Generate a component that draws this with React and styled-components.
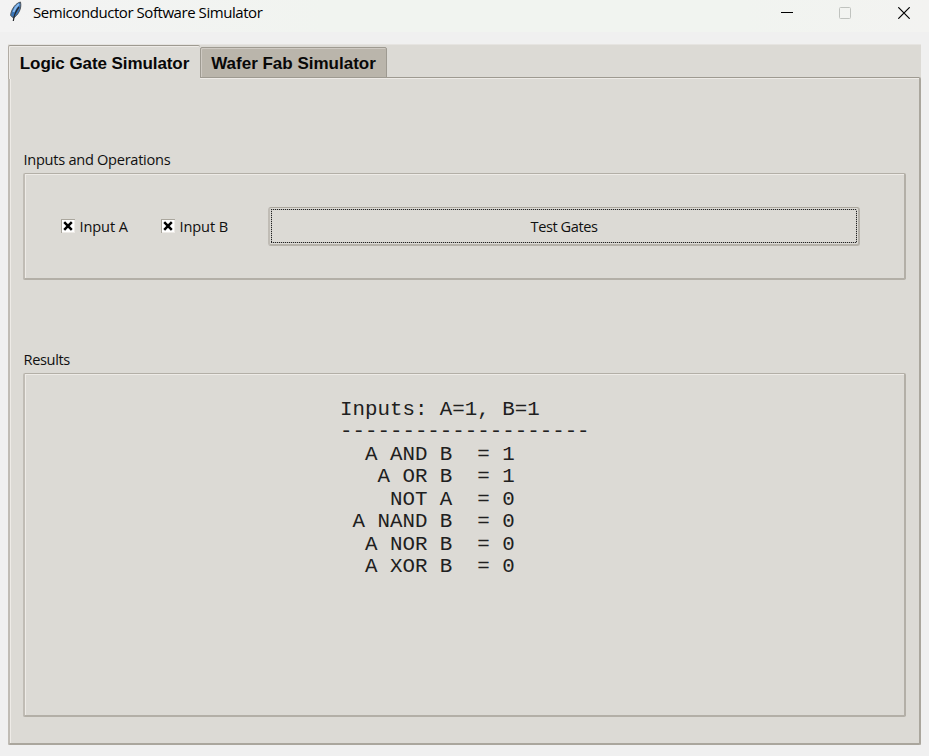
import React from "react";
import styled, { createGlobalStyle } from "styled-components";

const Global = createGlobalStyle`
  * { box-sizing: border-box; }
  body { margin: 0; background: #f0f0f0; overflow: hidden; }
`;

const Window = styled.div`
  width: 929px;
  height: 756px;
  background: #f0f0f0;
  color: #101010;
  font-family: "Open Sans", "Noto Sans", sans-serif;
  font-size: 14.6px;
`;

const TitleBar = styled.header`
  height: 32px;
  display: flex;
  align-items: flex-start;
  background: linear-gradient(90deg, #f3f3f3, #f1f4f0 35%, #f1f4f0 80%, #f3f3f1);
`;

const FeatherIcon = styled.svg`
  width: 14px;
  height: 21px;
  margin: 1px 0 0 8px;
`;

const Title = styled.h1`
  margin: 2px 0 0 11px;
  flex: 1;
  font-size: 15px;
  font-weight: 400;
  line-height: 20px;
  letter-spacing: -0.44px;
  white-space: nowrap;
  color: #000;
`;

const WindowControls = styled.div`
  display: flex;
  gap: 46px;
  padding: 7px 19px 0 0;
`;

const ControlIcon = styled.svg`
  width: 12px;
  height: 12px;
  display: block;

  &:last-child { margin-left: 1px; }
`;

const Notebook = styled.main`
  margin: 12px 8px 0;
  width: 913px;
  height: 701px;
  background: #dcdad5;
  border-top: 1px solid #e6e4e1;
  display: flex;
  flex-direction: column;
`;

const TabList = styled.nav`
  height: 32px;
  display: flex;
  align-items: flex-end;
`;

const Tab = styled.button`
  appearance: none;
  margin: 0;
  padding: 2px 0 0;
  width: ${(p) => p.$width}px;
  height: ${(p) => (p.$active ? 34 : 31)}px;
  margin-bottom: ${(p) => (p.$active ? -2 : -1)}px;
  border: 1px solid #9e9a91;
  border-bottom: ${(p) => (p.$active ? "0" : "1px solid #9e9a91")};
  border-left-color: ${(p) => (p.$active ? "#b1aca4" : "#9e9a91")};
  border-right-width: ${(p) => (p.$active ? 0 : 1)}px;
  border-radius: 2px 2px 0 0;
  background: ${(p) => (p.$active ? "#dcdad5" : "#bab5ab")};
  box-shadow: inset 1px 1px ${(p) => (p.$active ? "#eeebe7" : "#cfcac3")};
  font: bold 17px/24px "Liberation Sans", Arial, sans-serif;
  letter-spacing: ${(p) => p.$spacing}px;
  white-space: nowrap;
  color: #080808;
  z-index: 1;
`;

const Pane = styled.section`
  flex: 1;
  border: 2px solid #aaa69d;
  border-top: 1px solid #9e9a91;
  border-left-color: #c0bcb5;
  border-radius: 0 2px 2px 2px;
  box-shadow: inset 1px 1px #eeebe7;
  padding: 71px 13px 0;
`;

const GroupLabel = styled.h2`
  margin: 0;
  height: 24px;
  padding-left: 0.5px;
  font-size: 14.6px;
  font-weight: 400;
  line-height: 20px;
  letter-spacing: ${(p) => p.$spacing}px;
  white-space: nowrap;
`;

const GroupFrame = styled.div`
  height: ${(p) => p.$height}px;
  margin-bottom: ${(p) => p.$gap}px;
  border: 2px solid #b3afa7;
  border-top-width: 1px;
  border-left-color: #c0bcb5;
  border-radius: 2px;
  box-shadow: inset 1px 1px #eeebe7;
`;

const InputsFrame = styled(GroupFrame)`
  display: flex;
  align-items: center;
  padding-left: 36px;
`;

const CheckLabel = styled.label`
  width: 100px;
  display: flex;
  align-items: center;
  gap: 4.5px;
  line-height: 20px;
  letter-spacing: -0.12px;
  white-space: nowrap;
`;

const CheckBox = styled.svg`
  width: 14px;
  height: 14px;
  flex: none;
`;

const GateButton = styled.button`
  width: 592px;
  height: 39px;
  margin-left: 7px;
  padding: 1px;
  border: 1px solid #aaa69d;
  border-left: 2px solid #c0bcb5;
  border-right: 2px solid #b5b1a9;
  border-bottom: 2px solid #b5b1a9;
  border-radius: 3px;
  background: #dcdad5;
  color: #101010;
  font: inherit;
  letter-spacing: -0.44px;
`;

const FocusRing = styled.span`
  height: 100%;
  display: flex;
  align-items: center;
  justify-content: center;
  background:
    repeating-linear-gradient(90deg, #222 0 1px, #b8b6b2 1px 2px) 0 0 / 100% 1px no-repeat,
    repeating-linear-gradient(90deg, #222 0 1px, #b8b6b2 1px 2px) 0 100% / 100% 1px no-repeat,
    repeating-linear-gradient(180deg, #222 0 1px, #b8b6b2 1px 2px) 0 0 / 1px 100% no-repeat,
    repeating-linear-gradient(180deg, #222 0 1px, #b8b6b2 1px 2px) 100% 0 / 1px 100% no-repeat;
`;

const Output = styled.pre`
  margin: 24.5px 0 0 315px;
  font: 20.8px/22.5px "Liberation Mono", "Courier New", monospace;
  color: #202020;
`;

const results = [
  "Inputs: A=1, B=1",
  "--------------------",
  "  A AND B  = 1",
  "   A OR B  = 1",
  "    NOT A  = 0",
  " A NAND B  = 0",
  "  A NOR B  = 0",
  "  A XOR B  = 0",
].join("\n");

function Check({ children }) {
  return (
    <CheckLabel>
      <CheckBox viewBox="0 0 14 14">
        <rect width="14" height="14" fill="#eeebe7" />
        <path d="M0 0H14V1H1V14H0Z" fill="#aaa69d" />
        <rect x="1" y="1" width="12" height="12" fill="#fff" />
        <path d="M3.2 3.2L10.8 10.8M10.8 3.2L3.2 10.8" stroke="#000" strokeWidth="2.5" />
      </CheckBox>
      {children}
    </CheckLabel>
  );
}

export default function App() {
  return (
    <Window>
      <Global />
      <TitleBar>
        <FeatherIcon viewBox="0 0 14 21">
          <path d="M12.5 1C8 2 3 8 2.6 14.5L5.5 17C10 14 14 8 12.5 1Z" fill="#3975b8" stroke="#50565c" strokeWidth="1" />
          <path d="M11 3C8.5 5 6.5 8 5.5 11" stroke="#8bbcf0" strokeWidth="2" fill="none" />
          <path d="M11 6C8.5 9 6 14 5.3 20" stroke="#26282c" strokeWidth="1.2" fill="none" />
        </FeatherIcon>
        <Title>Semiconductor Software Simulator</Title>
        <WindowControls>
          <ControlIcon viewBox="0 0 12 12"><path d="M0 5.5H12" stroke="#000" /></ControlIcon>
          <ControlIcon viewBox="0 0 12 12"><rect x=".5" y=".5" width="11" height="11" rx="1" fill="none" stroke="#c0c3bf" /></ControlIcon>
          <ControlIcon viewBox="0 0 12 12"><path d="M.3.3L11.7 11.7M11.7.3L.3 11.7" stroke="#000" strokeWidth="1.2" /></ControlIcon>
        </WindowControls>
      </TitleBar>
      <Notebook>
        <TabList>
          <Tab $active $width={192} $spacing={-0.08}>Logic Gate Simulator</Tab>
          <Tab $width={187} $spacing={0}>Wafer Fab Simulator</Tab>
        </TabList>
        <Pane>
          <GroupLabel $spacing={-0.28}>Inputs and Operations</GroupLabel>
          <InputsFrame $height={107} $gap={69}>
            <Check>Input A</Check>
            <Check>Input B</Check>
            <GateButton><FocusRing>Test Gates</FocusRing></GateButton>
          </InputsFrame>
          <GroupLabel $spacing={-0.36}>Results</GroupLabel>
          <GroupFrame $height={344} $gap={0}>
            <Output>{results}</Output>
          </GroupFrame>
        </Pane>
      </Notebook>
    </Window>
  );
}
